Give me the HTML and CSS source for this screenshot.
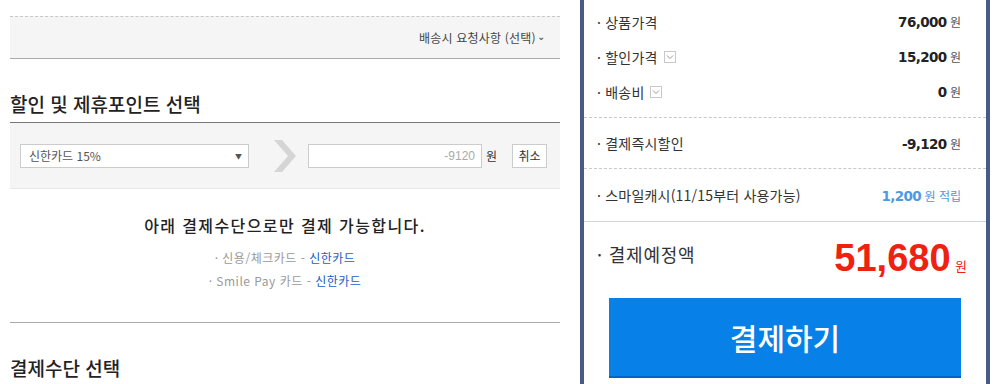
FILE: index.html
```html
<!DOCTYPE html>
<html lang="ko">
<head>
  <meta charset="UTF-8">
  <link rel="stylesheet" href="styles.css">
  <title>주문/결제</title>
</head>
<body>
  <div class="page">
    <div class="order-main">
      <div class="delivery-request">
        <span class="request-toggle">배송시 요청사항 (선택)<span class="caret">&#8964;</span></span>
      </div>

      <h2 class="section-title">할인 및 제휴포인트 선택</h2>
      <div class="discount-box">
        <div class="fake-select">
          <span>신한카드 15%</span>
          <span class="select-arrow">&#9660;</span>
        </div>
        <svg class="step-arrow" width="24" height="32" viewBox="0 0 24 32">
          <polygon points="0,0 8,0 22,16 8,32 0,32 14,16" fill="#d5d5d5"></polygon>
        </svg>
        <div class="amount-input">-9120</div>
        <span class="won">원</span>
        <button class="cancel-button">취소</button>
      </div>

      <div class="notice">
        <p class="notice-title">아래 결제수단으로만 결제 가능합니다.</p>
        <p class="notice-item">· 신용/체크카드 - <span class="card-name">신한카드</span></p>
        <p class="notice-item">· Smile Pay 카드 - <span class="card-name">신한카드</span></p>
      </div>

      <h2 class="section-title last">결제수단 선택</h2>
    </div>

    <div class="summary">
      <div class="summary-group first">
        <div class="summary-row">
          <span class="label">· 상품가격</span>
          <span class="value"><b>76,000</b> 원</span>
        </div>
        <div class="summary-row">
          <span class="label">· 할인가격 <span class="more-box"><svg width="8" height="6" viewBox="0 0 8 6"><polyline points="1,1.5 4,4.5 7,1.5" fill="none" stroke="#999" stroke-width="1"></polyline></svg></span></span>
          <span class="value"><b>15,200</b> 원</span>
        </div>
        <div class="summary-row">
          <span class="label">· 배송비 <span class="more-box"><svg width="8" height="6" viewBox="0 0 8 6"><polyline points="1,1.5 4,4.5 7,1.5" fill="none" stroke="#999" stroke-width="1"></polyline></svg></span></span>
          <span class="value"><b>0</b> 원</span>
        </div>
      </div>
      <div class="summary-group single">
        <div class="summary-row">
          <span class="label">· 결제즉시할인</span>
          <span class="value"><b>-9,120</b> 원</span>
        </div>
      </div>
      <div class="summary-group single cash">
        <div class="summary-row">
          <span class="label">· 스마일캐시(11/15부터 사용가능)</span>
          <span class="value blue"><b>1,200</b> 원 적립</span>
        </div>
      </div>

      <div class="total">
        <div class="total-row">
          <span class="total-label">· 결제예정액</span>
          <span class="total-value"><b>51,680</b> <span class="total-won">원</span></span>
        </div>
        <button class="pay-button">결제하기</button>
      </div>
    </div>
  </div>
</body>
</html>
```

FILE: styles.css
```css
  body {
    margin: 0;
    background-color: #fff;
    font-family: "Noto Sans CJK KR", "Noto Sans", sans-serif;
    color: #333;
  }

  p {
    margin: 0;
  }

  .page {
    display: flex;
    width: 999px;
    height: 384px;
    overflow: hidden;
  }

  .order-main {
    width: 550px;
    margin-left: 10px;
    padding-top: 16px;
  }

  .delivery-request {
    height: 41px;
    background-color: #f5f5f5;
    border-top: 1px dashed #c8c8c8;
    border-bottom: 1px solid #aaa;
    display: flex;
    justify-content: flex-end;
    align-items: center;
    padding-right: 15px;
  }

  .request-toggle {
    font-size: 12px;
    color: #444;
    letter-spacing: 0.2px;
  }

  .caret {
    font-size: 10px;
    margin-left: 1px;
    position: relative;
    top: -3px;
  }

  .section-title {
    margin: 0;
    padding: 33px 0 6px;
    font-size: 19px;
    line-height: 24px;
    font-weight: 500;
    color: #222;
    letter-spacing: 0;
    border-bottom: 1px solid #777;
  }

  .section-title.last {
    border-bottom: none;
    padding-top: 33px;
  }

  .discount-box {
    height: 65px;
    background-color: #f5f5f5;
    border-bottom: 1px solid #e8e8e8;
    display: flex;
    align-items: center;
    padding-left: 10px;
  }

  .fake-select {
    box-sizing: border-box;
    width: 229px;
    height: 24px;
    border: 1px solid #ccc;
    background-color: #fff;
    display: flex;
    justify-content: space-between;
    align-items: center;
    padding: 0 6px 0 8px;
    font-size: 12px;
    color: #555;
  }

  .select-arrow {
    font-size: 7px;
    color: #555;
  }

  .step-arrow {
    margin: 0 10px 0 25px;
  }

  .amount-input {
    width: 174px;
    height: 24px;
    box-sizing: border-box;
    border: 1px solid #ccc;
    background-color: #fff;
    text-align: right;
    padding-right: 6px;
    font-size: 12px;
    line-height: 22px;
    color: #aaa;
    font-family: "Liberation Sans", sans-serif;
  }

  .won {
    font-size: 12px;
    margin-left: 4px;
    color: #333;
  }

  .cancel-button {
    margin-left: 15px;
    width: 35px;
    height: 24px;
    padding: 0;
    border: 1px solid #ccc;
    background-color: #fff;
    font-family: inherit;
    font-size: 12px;
    color: #333;
  }

  .notice {
    text-align: center;
    padding-top: 24px;
    height: 109px;
    border-bottom: 1px solid #aaa;
  }

  .notice-title {
    font-size: 16px;
    line-height: 24px;
    font-weight: 500;
    color: #222;
    letter-spacing: 1.4px;
    margin-bottom: 9px;
  }

  .notice-item {
    font-size: 12px;
    line-height: 23px;
    color: #999;
    letter-spacing: 0.5px;
  }

  .card-name {
    color: #1a5cc6;
  }

  .summary {
    width: 402px;
    margin-left: 20px;
    border-left: 4px solid #485a88;
    border-right: 4px solid #485a88;
  }

  .summary-group {
    border-bottom: 1px dashed #c8c8c8;
    padding: 4px 0 8px;
  }

  .summary-group.single {
    padding: 0;
  }

  .summary-group.single .summary-row {
    height: 50px;
  }

  .summary-group.cash {
    border-bottom: 1px solid #cfd5e3;
  }

  .summary-group.cash .summary-row {
    height: 52px;
  }

  .summary-row {
    height: 35px;
    display: flex;
    justify-content: space-between;
    align-items: center;
    padding: 0 25px 0 13px;
  }

  .label {
    font-size: 14px;
    color: #333;
    letter-spacing: 0.2px;
    display: flex;
    align-items: center;
  }

  .more-box {
    display: inline-flex;
    justify-content: center;
    align-items: center;
    width: 10px;
    height: 10px;
    border: 1px solid #c8c8c8;
    margin-left: 6px;
  }

  .value {
    font-size: 12px;
    color: #555;
  }

  .value b {
    font-family: "DejaVu Sans", sans-serif;
    font-size: 13.5px;
    color: #222;
    letter-spacing: -0.6px;
  }

  .value.blue, .value.blue b {
    color: #4f98e2;
  }

  .total {
    padding: 20px 25px 0 13px;
  }

  .total-row {
    height: 56px;
    display: flex;
    justify-content: space-between;
    align-items: flex-start;
  }

  .total-label {
    font-size: 18px;
    line-height: 24px;
    color: #333;
    letter-spacing: 0.8px;
  }

  .total-value {
    color: #ee2211;
    line-height: 40px;
    margin-top: -4px;
    margin-right: -6px;
  }

  .total-value b {
    font-family: "Liberation Sans", sans-serif;
    font-size: 38px;
  }

  .total-won {
    font-size: 13px;
  }

  .pay-button {
    margin-left: 12px;
    width: 352px;
    height: 80px;
    border: none;
    border-bottom: 2px solid #0065c4;
    background-color: #0780e8;
    color: #fff;
    font-family: inherit;
    font-size: 30px;
    font-weight: 500;
    padding: 0;
  }
```
